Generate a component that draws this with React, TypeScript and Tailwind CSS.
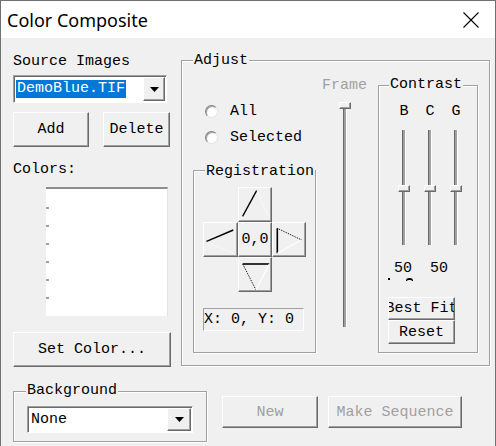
import React from "react";

const raised =
  "border border-t-white border-l-white border-b-[#696969] border-r-[#696969] shadow-[inset_-1px_-1px_0_#a0a0a0]";
const sunken =
  "border border-t-[#a0a0a0] border-l-[#a0a0a0] border-b-white border-r-white shadow-[inset_1px_1px_0_#696969]";
const etched = "border border-[#a0a0a0] shadow-[inset_1px_1px_0_#fff,1px_1px_0_#fff]";

function Btn({
  className = "",
  children,
  disabled = false,
}: {
  className?: string;
  children?: React.ReactNode;
  disabled?: boolean;
}) {
  return (
    <div
      className={`${raised} flex items-center justify-center overflow-hidden whitespace-nowrap bg-[#f0f0f0] ${
        disabled ? "text-[#a0a0a0]" : "text-black"
      } ${className}`}
    >
      {children}
    </div>
  );
}

function DropBtn({ className = "" }: { className?: string }) {
  return (
    <div className={`${raised} w-[22px] h-full flex items-center justify-center bg-[#f0f0f0] ${className}`}>
      <svg width="9" height="5" viewBox="0 0 9 5">
        <path d="M0 0h9l-4.5 5z" fill="#000" />
      </svg>
    </div>
  );
}

function Group({
  label,
  className = "",
  labelClass = "",
  children,
}: {
  label: string;
  className?: string;
  labelClass?: string;
  children?: React.ReactNode;
}) {
  return (
    <div className={`relative ${etched} ${className}`}>
      <span className={`absolute bg-[#f0f0f0] px-[1px] leading-[17px] whitespace-nowrap ${labelClass}`}>{label}</span>
      {children}
    </div>
  );
}

function Radio({ label, className = "" }: { label: string; className?: string }) {
  return (
    <div className={`flex items-center h-[17px] ${className}`}>
      <div className="ml-[12px] w-[13px] h-[13px] rounded-full bg-white border border-t-[#808080] border-l-[#808080] border-b-[#e3e3e3] border-r-[#e3e3e3] shadow-[inset_1px_1px_0_#a0a0a0]" />
      <span className="ml-[12px]">{label}</span>
    </div>
  );
}

function VSlider({ h, thumbTop }: { h: number; thumbTop: number }) {
  return (
    <div className="relative flex justify-center" style={{ height: h }}>
      <div className="w-[4px] h-full bg-[#a0a0a0] border-l border-l-[#696969] border-r border-r-white" />
      <div
        className={`absolute left-1/2 -translate-x-1/2 w-[12px] h-[7px] bg-[#f0f0f0] ${raised}`}
        style={{ top: thumbTop }}
      />
    </div>
  );
}

function PadBtn({ children, className = "" }: { children?: React.ReactNode; className?: string }) {
  return <div className={`${raised} bg-[#f0f0f0] flex items-center justify-center ${className}`}>{children}</div>;
}

export default function App() {
  return (
    <div className="w-[496px] h-[446px] overflow-hidden border-x border-t border-[#707070] bg-[#f0f0f0] flex flex-col font-['Liberation_Mono',monospace] text-[15px] leading-[17px] text-black">
      {/* Title bar */}
      <div className="h-[37px] shrink-0 bg-white flex items-center justify-between pl-[6px] pr-[16px]">
        <span className="font-['Noto_Sans',sans-serif] text-[18px] leading-[24px] text-black">Color Composite</span>
        <svg width="16" height="16" viewBox="0 0 16 16">
          <path d="M0.5 0.5L15.5 15.5M15.5 0.5L0.5 15.5" stroke="#000" strokeWidth="1.1" />
        </svg>
      </div>

      {/* Body */}
      <div className="flex-1 flex flex-col">
        <div className="flex items-start pl-[12px]">
          {/* Left column */}
          <div className="w-[158px] flex flex-col">
            <div className="mt-[15px] h-[17px]">Source Images</div>
            <div className={`${sunken} mt-[5px] bg-white flex items-stretch w-[154px] h-[28px] p-[1px]`}>
              <div className="flex-1 flex items-center pl-[1px]">
                <span className="bg-[#0078d7] text-white px-[1px] leading-[18px]">DemoBlue.TIF</span>
              </div>
              <DropBtn />
            </div>
            <div className="mt-[9px] flex">
              <Btn className="w-[76px] h-[35px]">Add</Btn>
              <Btn className="ml-[14px] w-[67px] h-[35px]">Delete</Btn>
            </div>
            <div className="mt-[14px] h-[17px]">Colors:</div>
            <div className="ml-[33px] mt-[9px] w-[122px] h-[129px] bg-white border-t-2 border-t-[#8c8c8c] border-r border-r-[#e3e3e3] flex">
              <div className="w-[3px] flex flex-col gap-[16px] pt-[18px]">
                {[0, 1, 2, 3, 4, 5].map((i) => (
                  <div key={i} className="w-[3px] h-[2px] bg-[#a0a0a0]" />
                ))}
              </div>
            </div>
            <Btn className="mt-[16px] w-[158px] h-[35px]">Set Color...</Btn>
          </div>

          {/* Adjust group */}
          <Group label="Adjust" className="ml-[10px] mt-[22px] w-[309px] h-[306px]" labelClass="top-[-9px] left-[11px]">
            <div className="flex items-start">
              {/* col A */}
              <div className="ml-[11px] w-[123px] flex flex-col">
                <Radio label="All" className="mt-[42px]" />
                <Radio label="Selected" className="mt-[9px]" />
                <Group
                  label="Registration"
                  className="mt-[24px] w-[123px] h-[183px]"
                  labelClass="top-[-8px] left-[11px]"
                >
                  <div className="ml-[9px] mt-[16px] grid grid-cols-[35px_34px_34px] grid-rows-[35px_35px_35px]">
                    <div />
                    <PadBtn>
                      <svg width="33" height="33" viewBox="0 0 33 33">
                        <path d="M3.7 28.7L18.3 2" stroke="#000" strokeWidth="1.4" />
                        <path d="M18.3 2L30.3 28.7" stroke="#fff" strokeWidth="1" strokeDasharray="1 1" />
                      </svg>
                    </PadBtn>
                    <div />
                    <PadBtn>
                      <svg width="33" height="33" viewBox="0 0 33 33">
                        <path d="M2 18.7L29.3 7" stroke="#000" strokeWidth="1.4" />
                        <path d="M2 18.7L29.3 30.3" stroke="#fff" strokeWidth="1" strokeDasharray="1 1" />
                      </svg>
                    </PadBtn>
                    <PadBtn>
                      <span>0,0</span>
                    </PadBtn>
                    <PadBtn>
                      <svg width="32" height="33" viewBox="0 0 32 33">
                        <path d="M4.3 5.3V30.3" stroke="#000" strokeWidth="1.6" />
                        <path d="M4.3 5.3L28.7 17" stroke="#000" strokeWidth="1" strokeDasharray="1 1" />
                        <path d="M28.7 17L4.3 30.3" stroke="#fff" strokeWidth="1.2" />
                      </svg>
                    </PadBtn>
                    <div />
                    <PadBtn>
                      <svg width="32" height="33" viewBox="0 0 32 33">
                        <path d="M3.7 6H30.3" stroke="#000" strokeWidth="1.6" />
                        <path d="M3.7 6L17 32" stroke="#000" strokeWidth="1" strokeDasharray="1 1" />
                        <path d="M17 32L30.3 6" stroke="#fff" strokeWidth="1.2" />
                      </svg>
                    </PadBtn>
                    <div />
                  </div>
                  <div className="ml-[9px] mt-[16px] w-[101px] h-[23px] border border-t-[#a0a0a0] border-l-[#a0a0a0] border-b-white border-r-white flex items-center whitespace-nowrap">
                    X: 0, Y: 0
                  </div>
                </Group>
              </div>

              {/* col B: Frame */}
              <div className="ml-[6px] w-[45px] flex flex-col items-center">
                <div className="mt-[16px] h-[17px] text-[#a0a0a0]">Frame</div>
                <div className="mt-[8px] w-full">
                  <VSlider h={225} thumbTop={0} />
                </div>
              </div>

              {/* col C: Contrast */}
              <Group label="Contrast" className="ml-[11px] mt-[24px] w-[100px] h-[268px]" labelClass="top-[-10px] left-[10px]">
                <div className="flex flex-col">
                  <div className="ml-[12px] mt-[17px] flex">
                    {["B", "C", "G"].map((l) => (
                      <div key={l} className="w-[26px] flex flex-col items-center">
                        <div className="h-[17px]">{l}</div>
                        <div className="mt-[10px] w-full">
                          <VSlider h={115} thumbTop={55} />
                        </div>
                      </div>
                    ))}
                  </div>
                  <div className="mt-[15px] h-[17px] flex">
                    <span className="ml-[15px]">50</span>
                    <span className="ml-[18px]">50</span>
                  </div>
                  <div className="mt-[1px] h-[4px] flex items-start">
                    <div className="ml-[9px] w-[2px] h-[2px] bg-black" />
                    <div className="ml-[16px] w-[7px] h-[3px] border-t-2 border-x border-black rounded-t-full" />
                  </div>
                  <Btn className="ml-[9px] mt-[15px] w-[67px] h-[23px]">Best Fit</Btn>
                  <Btn className="ml-[9px] w-[67px] h-[24px]">Reset</Btn>
                </div>
              </Group>
            </div>
          </Group>
        </div>

        {/* Bottom row */}
        <div className="mt-[24px] flex items-start pl-[12px]">
          <Group label="Background" className="w-[194px] h-[51px]" labelClass="top-[-10px] left-[12px]">
            <div className={`${sunken} ml-[13px] mt-[14px] bg-white flex items-stretch w-[166px] h-[27px] p-[1px]`}>
              <div className="flex-1 flex items-center pl-[2px]">None</div>
              <DropBtn className="w-[24px]" />
            </div>
          </Group>
          <Btn disabled className="ml-[15px] mt-[5px] w-[96px] h-[32px]">
            New
          </Btn>
          <Btn disabled className="ml-[10px] mt-[5px] w-[134px] h-[32px]">
            Make Sequence
          </Btn>
        </div>
      </div>
    </div>
  );
}
